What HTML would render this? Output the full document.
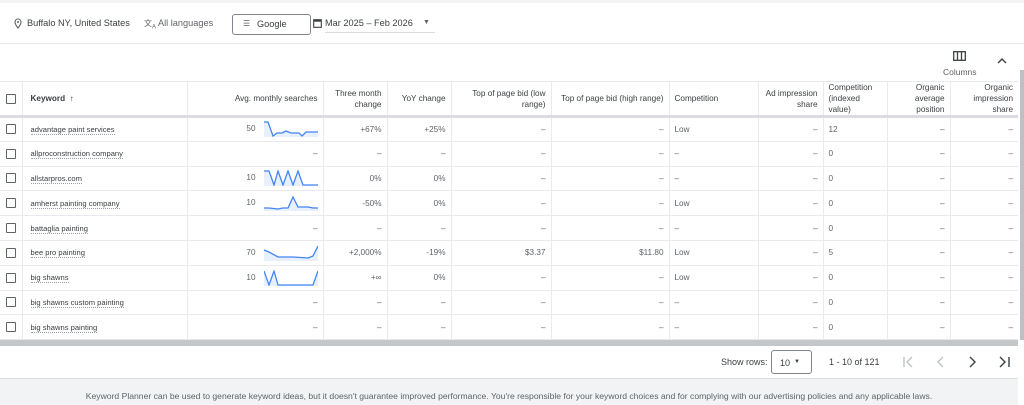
<!DOCTYPE html><html><head><style>
*{box-sizing:border-box;margin:0;padding:0}
body{width:1024px;height:405px;overflow:hidden;background:#fff;font-family:"Liberation Sans",Arial,sans-serif;color:#3c4043;position:relative}
.top{position:absolute;left:0;top:0;width:1024px;height:3px;background:#f1f3f4}
.filters{position:absolute;top:3px;left:0;width:1024px;height:41px;border-bottom:1px solid #e8eaed;font-size:9.2px;color:#3c4043}
.filters span{position:absolute;top:15px}
.gbtn{position:absolute;left:232px;top:11px;width:79px;height:21px;border:1px solid #80868b;border-radius:3px}
.scroll{position:absolute;right:0;top:70px;width:4px;height:270px;background:#bdc1c6}
table{position:absolute;left:0;top:81px;border-collapse:collapse;table-layout:fixed;width:1018px;font-size:8.2px}
th{height:34px;font-weight:normal;color:#3c4043;border-left:1px solid #e8eaed;border-top:1px solid #e8eaed;border-bottom:3px solid #dadce0;text-align:right;padding:0 5px;line-height:11px}
td{height:24.8px;border-left:1px solid #e8eaed;border-bottom:1px solid #e8eaed;text-align:right;padding:0 5px;color:#5f6368;white-space:nowrap}
td.l,th.l{text-align:left}
td:first-child,th:first-child{border-left:none}
.cb{display:inline-block;width:10px;height:10px;border:1.5px solid #5f6368;border-radius:1px;vertical-align:middle}
.kw{color:#3c4043;border-bottom:1px dotted #9aa0a6;font-size:7.6px}
svg.sp{vertical-align:middle;margin-left:8px}
.bar{position:absolute;left:0;top:340px;width:1018px;height:6px;background:#c4c7c9}
.pag{position:absolute;top:346px;left:0;width:1018px;height:32px;font-size:9px;color:#3c4043}
.footer{position:absolute;left:0;top:378px;width:1018px;height:27px;background:#f1f3f4;border-top:1px solid #dadce0;font-size:8.6px;color:#5f6368;text-align:center;padding-top:12px}
</style></head><body>
<div class="top"></div>
<div class="filters">
<svg style="position:absolute;left:14px;top:15px" width="8" height="11" viewBox="0 0 8 11"><path d="M4 1a3 3 0 0 1 3 3c0 2.2-3 6-3 6S1 6.2 1 4a3 3 0 0 1 3-3z" fill="none" stroke="#5f6368" stroke-width="1.1"/><circle cx="4" cy="4" r="1" fill="#5f6368"/></svg>
<span style="left:27px">Buffalo NY, United States</span>
<span style="left:144px;color:#5f6368;font-size:8px;top:15px">文<sub style="font-size:6px">A</sub></span>
<span style="left:158px;color:#5f6368">All languages</span>
<div class="gbtn"><span style="left:10px;top:4px;font-size:8px;color:#5f6368">☰</span><span style="left:24px;top:4px">Google</span></div>
<svg style="position:absolute;left:313px;top:15px" width="9" height="10" viewBox="0 0 9 10"><rect x="0.7" y="1.7" width="7.6" height="7.6" fill="none" stroke="#3c4043" stroke-width="1.1"/><rect x="0.7" y="1.7" width="7.6" height="2" fill="#3c4043"/></svg>
<span style="left:325px">Mar 2025 – Feb 2026</span>
<span style="left:423px;font-size:7px;top:16px;color:#5f6368">▼</span>
<div style="position:absolute;left:325px;top:29px;width:110px;height:1px;background:#dadce0"></div>
</div>
<svg style="position:absolute;left:953px;top:51px" width="13" height="10" viewBox="0 0 13 10"><rect x="0.7" y="0.7" width="11.6" height="8.6" fill="none" stroke="#3c4043" stroke-width="1.3"/><path d="M4.5 1v8M8.5 1v8" stroke="#3c4043" stroke-width="1.3"/></svg>
<div style="position:absolute;left:943px;top:67px;font-size:8.5px;color:#5f6368">Columns</div>
<svg style="position:absolute;left:997px;top:57px" width="10" height="7" viewBox="0 0 10 7"><path d="M1 6l4-4 4 4" fill="none" stroke="#3c4043" stroke-width="1.4"/></svg>
<div class="scroll"></div>
<table>
<colgroup><col style="width:22px"><col style="width:165px"><col style="width:136px"><col style="width:64px"><col style="width:64px"><col style="width:100px"><col style="width:118px"><col style="width:89px"><col style="width:65px"><col style="width:64px"><col style="width:63px"><col style="width:68px"></colgroup>
<tr><th class="l" style="padding-left:6px"><span class="cb"></span></th><th class="l" style="font-weight:bold;padding-left:8px">Keyword&nbsp;&nbsp;<span style="font-weight:normal">↑</span></th><th>Avg. monthly searches</th><th>Three month change</th><th>YoY change</th><th>Top of page bid (low range)</th><th>Top of page bid (high range)</th><th class="l">Competition</th><th>Ad impression share</th><th class="l">Competition (indexed value)</th><th>Organic average position</th><th>Organic impression share</th></tr>
<tr><td class="l" style="padding-left:6px"><span class="cb"></span></td><td class="l" style="padding-left:8px"><span class="kw">advantage paint services</span></td><td>50<svg class="sp" width="54" height="16"><path d="M0 1H4L9 15L13 12H18L22 10L27 12H35L38 15L42 11H54V16H0Z" fill="#e8f0fe"/><path d="M0 1H4L9 15L13 12H18L22 10L27 12H35L38 15L42 11H54" fill="none" stroke="#4285f4" stroke-width="1.3"/></svg></td><td>+67%</td><td>+25%</td><td>–</td><td>–</td><td class="l">Low</td><td>–</td><td class="l">12</td><td>–</td><td>–</td></tr>
<tr><td class="l" style="padding-left:6px"><span class="cb"></span></td><td class="l" style="padding-left:8px"><span class="kw">allproconstruction company</span></td><td>–</td><td>–</td><td>–</td><td>–</td><td>–</td><td class="l">–</td><td>–</td><td class="l">0</td><td>–</td><td>–</td></tr>
<tr><td class="l" style="padding-left:6px"><span class="cb"></span></td><td class="l" style="padding-left:8px"><span class="kw">allstarpros.com</span></td><td>10<svg class="sp" width="54" height="16"><path d="M0 1H5L10 15L14 1L19 15L24 1L29 15L34 1L39 15H54V16H0Z" fill="#e8f0fe"/><path d="M0 1H5L10 15L14 1L19 15L24 1L29 15L34 1L39 15H54" fill="none" stroke="#4285f4" stroke-width="1.3"/></svg></td><td>0%</td><td>0%</td><td>–</td><td>–</td><td class="l">–</td><td>–</td><td class="l">0</td><td>–</td><td>–</td></tr>
<tr><td class="l" style="padding-left:6px"><span class="cb"></span></td><td class="l" style="padding-left:8px"><span class="kw">amherst painting company</span></td><td>10<svg class="sp" width="54" height="16"><path d="M0 13L5 13L14 14L19 13H24L29 2L34 12H44L49 13H54V16H0Z" fill="#e8f0fe"/><path d="M0 13L5 13L14 14L19 13H24L29 2L34 12H44L49 13H54" fill="none" stroke="#4285f4" stroke-width="1.3"/></svg></td><td>-50%</td><td>0%</td><td>–</td><td>–</td><td class="l">Low</td><td>–</td><td class="l">0</td><td>–</td><td>–</td></tr>
<tr><td class="l" style="padding-left:6px"><span class="cb"></span></td><td class="l" style="padding-left:8px"><span class="kw">battaglia painting</span></td><td>–</td><td>–</td><td>–</td><td>–</td><td>–</td><td class="l">–</td><td>–</td><td class="l">0</td><td>–</td><td>–</td></tr>
<tr><td class="l" style="padding-left:6px"><span class="cb"></span></td><td class="l" style="padding-left:8px"><span class="kw">bee pro painting</span></td><td>70<svg class="sp" width="54" height="16"><path d="M0 5L5 7L14 12H29L44 13L49 11L54 1V16H0Z" fill="#e8f0fe"/><path d="M0 5L5 7L14 12H29L44 13L49 11L54 1" fill="none" stroke="#4285f4" stroke-width="1.3"/></svg></td><td>+2,000%</td><td>-19%</td><td>$3.37</td><td>$11.80</td><td class="l">Low</td><td>–</td><td class="l">5</td><td>–</td><td>–</td></tr>
<tr><td class="l" style="padding-left:6px"><span class="cb"></span></td><td class="l" style="padding-left:8px"><span class="kw">big shawns</span></td><td>10<svg class="sp" width="54" height="16"><path d="M0 1L5 15L10 1L14 15H49L54 1V16H0Z" fill="#e8f0fe"/><path d="M0 1L5 15L10 1L14 15H49L54 1" fill="none" stroke="#4285f4" stroke-width="1.3"/></svg></td><td>+∞</td><td>0%</td><td>–</td><td>–</td><td class="l">Low</td><td>–</td><td class="l">0</td><td>–</td><td>–</td></tr>
<tr><td class="l" style="padding-left:6px"><span class="cb"></span></td><td class="l" style="padding-left:8px"><span class="kw">big shawns custom painting</span></td><td>–</td><td>–</td><td>–</td><td>–</td><td>–</td><td class="l">–</td><td>–</td><td class="l">0</td><td>–</td><td>–</td></tr>
<tr><td class="l" style="padding-left:6px"><span class="cb"></span></td><td class="l" style="padding-left:8px"><span class="kw">big shawns painting</span></td><td>–</td><td>–</td><td>–</td><td>–</td><td>–</td><td class="l">–</td><td>–</td><td class="l">0</td><td>–</td><td>–</td></tr>
</table>
<div class="bar"></div>
<div class="pag">
<span style="position:absolute;left:721px;top:11px">Show rows:</span>
<div style="position:absolute;left:771px;top:4px;width:41px;height:24px;border:1px solid #80868b;border-radius:3px"><span style="position:absolute;left:8px;top:7px">10</span><span style="position:absolute;left:22px;top:8px;font-size:6px">▼</span></div>
<span style="position:absolute;left:829px;top:11px">1 - 10 of 121</span>
<svg style="position:absolute;left:903px;top:10px" width="110" height="12" viewBox="0 0 110 12"><path d="M1 1v10M9 1L4 6l5 5" fill="none" stroke="#bdc1c6" stroke-width="1.4"/><path d="M40 1L35 6l5 5" fill="none" stroke="#bdc1c6" stroke-width="1.4"/><path d="M67 1l5 5-5 5" fill="none" stroke="#3c4043" stroke-width="1.4"/><path d="M97 1l5 5-5 5M106 1v10" fill="none" stroke="#3c4043" stroke-width="1.4"/></svg>
</div>
<div class="footer">Keyword Planner can be used to generate keyword ideas, but it doesn't guarantee improved performance. You're responsible for your keyword choices and for complying with our advertising policies and any applicable laws.</div>
</body></html>
